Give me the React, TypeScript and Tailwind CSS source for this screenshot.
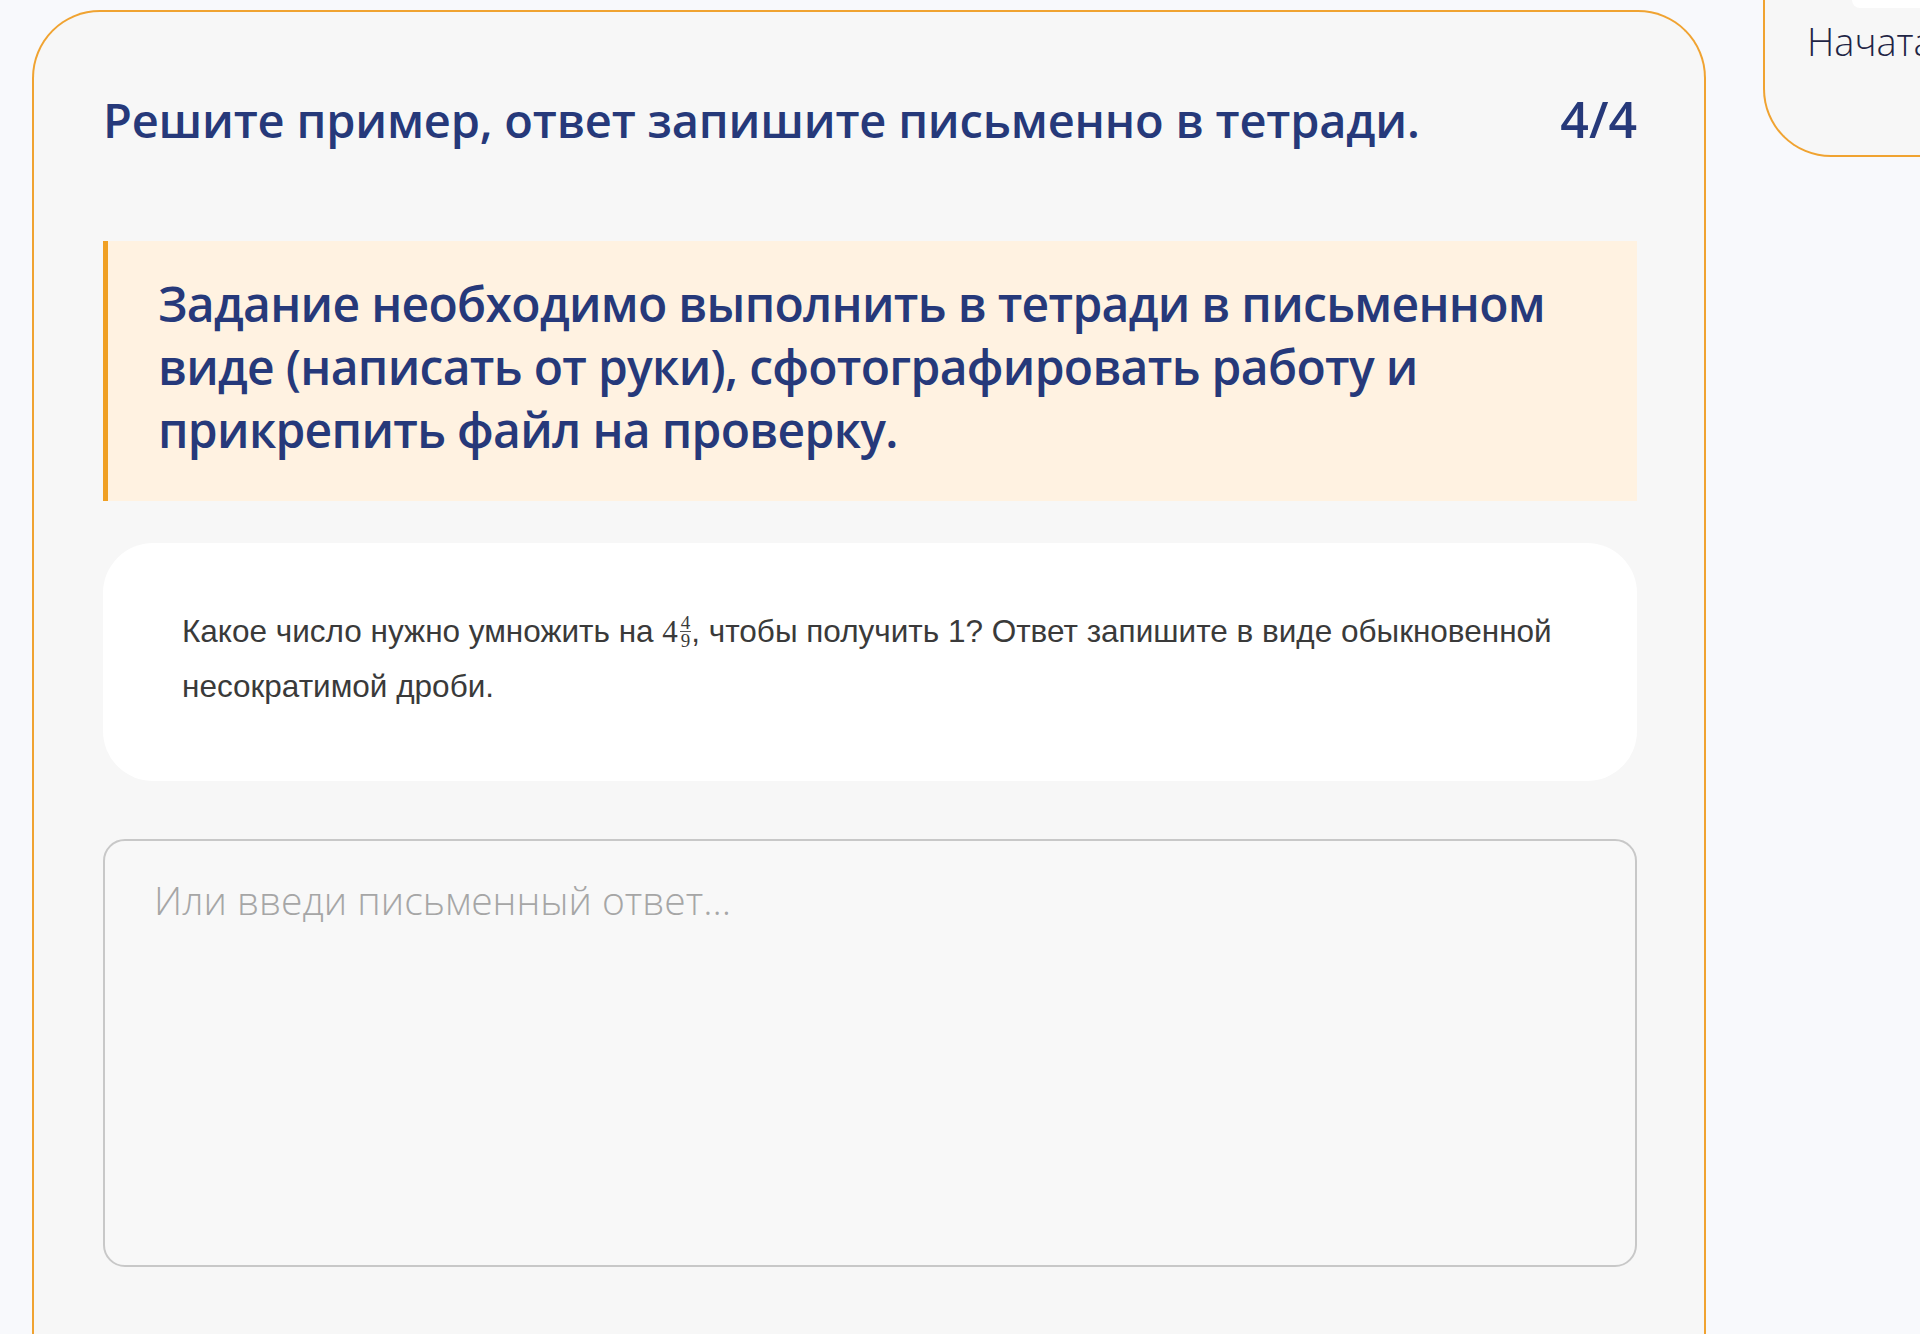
import React from "react";

export default function App() {
  return (
    <div className="w-[1920px] h-[1334px] overflow-hidden bg-[#f8f9fc] flex items-start">
      {/* Main card */}
      <div className="ml-[32px] mt-[10px] w-[1674px] h-[1400px] shrink-0 rounded-t-[68px] border-2 border-b-0 border-[#f0a331] bg-[#f7f7f7] pl-[69px] pr-[67px] pt-[79px]">
        <div className="flex items-baseline justify-between font-['Open_Sans',sans-serif] font-semibold text-[#26397a]">
          <h1 className="text-[47px] leading-[56px] tracking-[-0.2px]">
            Решите пример, ответ запишите письменно в тетради.
          </h1>
          <span className="text-[50px] leading-[56px]">4/4</span>
        </div>

        <div className="mt-[93px] border-l-[5px] border-[#f0a024] bg-[#fff2e1] pl-[50px] pr-[30px] pt-[31px] pb-[40px] font-['Open_Sans',sans-serif] font-semibold text-[48px] leading-[63px] tracking-[-0.7px] text-[#26397a]">
          Задание необходимо выполнить в тетради в письменном
          <br />
          виде (написать от руки), сфотографировать работу и
          <br />
          прикрепить файл на проверку.
        </div>

        <div className="mt-[42px] rounded-[50px] bg-white pl-[79px] pr-[40px] pt-[61px] pb-[67px] font-['Liberation_Sans',Arial,sans-serif] text-[31.5px] leading-[55px] text-[#3a3a3a]">
          Какое число нужно умножить на{" "}
          <span className="inline-flex items-center font-['Liberation_Serif',serif]">
            <span className="text-[31px]">4</span>
            <span className="ml-[2px] inline-flex flex-col items-center text-[19px] leading-[17px]">
              <span>4</span>
              <span className="border-t border-[#555] px-[1px]">9</span>
            </span>
          </span>
          , чтобы получить 1? Ответ запишите в виде обыкновенной
          <br />
          несократимой дроби.
        </div>

        <textarea
          className="mt-[58px] block h-[428px] w-full resize-none rounded-[22px] border-2 border-[#c8c8c8] bg-[#f8f8f8] pl-[49px] pr-[40px] pt-[36px] font-['Open_Sans',sans-serif] font-light text-[39px] leading-[46px] text-[#333] outline-none placeholder:text-[#a6a6a6]"
          placeholder="Или введи письменный ответ..."
        />
      </div>

      {/* Right card */}
      <div className="ml-[57px] w-[400px] h-[157px] shrink-0 rounded-bl-[68px] border-l-2 border-b-2 border-[#f0a331] bg-[#f7f7f7]">
        <div className="ml-[87px] h-[8px] rounded-bl-[10px] bg-white" />
        <div className="ml-[42px] mt-[9px] font-['Open_Sans',sans-serif] font-light text-[38px] leading-[48px] text-[#1f2545] whitespace-nowrap">
          Начата
        </div>
      </div>
    </div>
  );
}
